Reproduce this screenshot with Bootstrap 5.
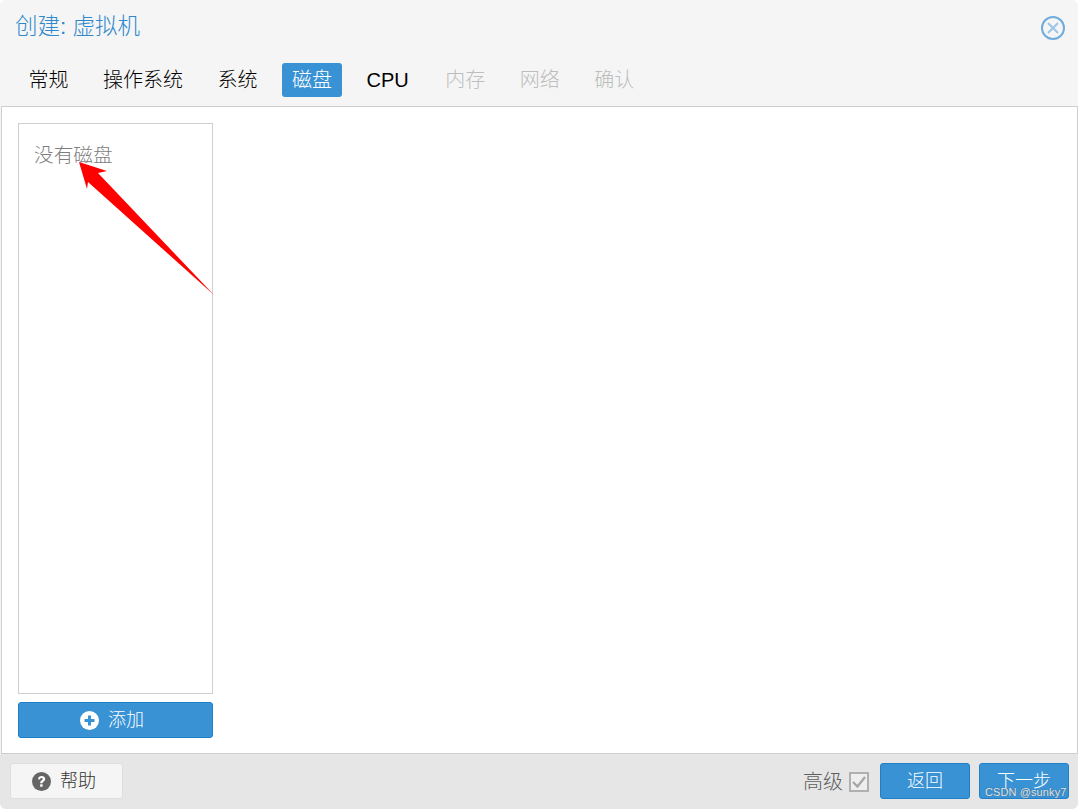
<!DOCTYPE html>
<html lang="zh">
<head>
<meta charset="utf-8">
<title>创建: 虚拟机</title>
<link href="https://cdn.jsdelivr.net/npm/bootstrap@5.3.0/dist/css/bootstrap.min.css" rel="stylesheet">
<style>
html,body{height:809px;overflow:hidden;background:#fff}
body{font-family:"Liberation Sans","Noto Sans CJK SC",sans-serif;font-weight:300}
.wiz{height:809px;width:1078px;background:#f5f5f5;border-radius:6px;overflow:hidden}
.wiz-head{height:62px;padding:12px 12px 0 15px}
.wiz-title{font-size:22.5px;line-height:30px;color:#2f88cc;font-weight:300}
.wiz-tabs{height:44px;gap:14.5px;padding:1px 0 0 18.500px}
.wiz-tab{font-size:20px;line-height:34px;height:34px;padding:0 10px;border-radius:3px;color:#000;font-weight:300;white-space:nowrap}
.wiz-tab.active{background:#3892d4;color:#fff}
.wiz-tab.off{color:#bdbdbd}
.wiz-tab.wide{padding-right:12px}
.wiz-body{flex:1;min-height:0;background:#fff;border:1px solid #cfcfcf;margin:0 0 0 1px;padding:16px 15px 15px 16px}
.disk-col{width:195px}
.disk-list{flex:1;min-height:0;border:1px solid #cfcfcf;padding:15px;font-size:19.7px;line-height:33px;color:#7d7d7d}
.btn-add{margin-top:8px;height:36px;font-size:18px;line-height:34px;padding:0 7px 0 0;background:#3892d4;border:1px solid #1f7fc9;color:#fff;border-radius:3px;font-weight:300}
.wiz-foot{height:55px;background:#e6e6e6;padding:9px 9px 10px 10px}
.btn-help{width:113px;height:36px;padding:0 5px 0 0;font-size:18px;line-height:34px;background:#f5f5f5;border:1px solid #dedede;border-radius:3px;color:#333;font-weight:300}
.btn-go{width:90px;height:36px;padding:0;font-size:18px;line-height:34px;background:#3892d4;border:1px solid #1f7fc9;color:#fff;border-radius:3px;font-weight:300}
.adv{font-size:20px;color:#5f5f5f;line-height:36px;margin-right:2px;padding-top:1px}
.chk{width:20px;height:20px;margin-left:6px;display:block}
.gap9{gap:9px}
.ptr{position:absolute;left:0;top:0;pointer-events:none}
.wmark{position:absolute;left:985px;top:785px;font:11px/14px "Liberation Sans",sans-serif;color:#dfe7ee;letter-spacing:.1px;text-shadow:0 0 1px #555}
.closex{display:block;margin-top:3px}
.ico-gap{margin-right:9px}
</style>
</head>
<body>
<div class="wiz d-flex flex-column">
  <div class="wiz-head d-flex justify-content-between">
    <div class="wiz-title">创建: 虚拟机</div>
    <svg class="closex" width="26" height="26" viewBox="0 0 26 26" fill="none"><circle cx="13" cy="13" r="11" stroke="#6fabdd" stroke-width="2"/><path d="M8 8l10 10M18 8L8 18" stroke="#9cc5e8" stroke-width="2"/></svg>
  </div>
  <nav class="wiz-tabs d-flex align-items-start">
    <span class="wiz-tab">常规</span>
    <span class="wiz-tab">操作系统</span>
    <span class="wiz-tab">系统</span>
    <span class="wiz-tab active">磁盘</span>
    <span class="wiz-tab wide">CPU</span>
    <span class="wiz-tab off">内存</span>
    <span class="wiz-tab off">网络</span>
    <span class="wiz-tab off">确认</span>
  </nav>
  <main class="wiz-body d-flex">
    <div class="disk-col d-flex flex-column">
      <div class="disk-list">没有磁盘</div>
      <button type="button" class="btn btn-add d-flex align-items-center justify-content-center">
        <svg width="19" height="19" viewBox="0 0 19 19" class="ico-gap"><circle cx="9.5" cy="9.5" r="9.5" fill="#fff"/><path d="M8 4.5h3V8h3.5v3H11v3.5H8V11H4.5V8H8z" fill="#3892d4"/></svg>
        <span>添加</span>
      </button>
    </div>
  </main>
  <footer class="wiz-foot d-flex justify-content-between">
    <button type="button" class="btn btn-help d-flex align-items-center justify-content-center">
      <svg width="19" height="19" viewBox="0 0 19 19" class="ico-gap"><circle cx="9.5" cy="9.5" r="9.5" fill="#666"/><path d="M6 7.2C6.2 5 7.8 4 9.6 4c2 0 3.6 1.2 3.6 3 0 2.500-2.700 2.600-2.700 4.300H8.200c0-2.700 2.500-3 2.500-4.200 0-.7-.5-1.100-1.200-1.100-.8 0-1.200.5-1.400 1.400zM8.200 12.300h2.400v2.500H8.200z" fill="#fff"/></svg>
      <span>帮助</span>
    </button>
    <div class="d-flex align-items-center gap9">
      <div class="adv d-flex align-items-center">高级<svg class="chk" viewBox="0 0 20 20" fill="none"><rect x="1" y="1" width="18" height="18" stroke="#b0b0b0" stroke-width="2" fill="#eee"/><path d="M4 10l4.500 4.500L16 5" stroke="#a5a5a5" stroke-width="2.200"/></svg></div>
      <button type="button" class="btn btn-go">返回</button>
      <button type="button" class="btn btn-go">下一步</button>
    </div>
  </footer>
</div>
<svg class="ptr" width="1081" height="809"><polygon points="79,162 107,171 98,173 214,295 88,182 87,189" fill="#f00"/></svg>
<div class="wmark">CSDN @sunky7</div>
<script src="https://cdn.jsdelivr.net/npm/bootstrap@5.3.0/dist/js/bootstrap.bundle.min.js"></script>
</body>
</html>
